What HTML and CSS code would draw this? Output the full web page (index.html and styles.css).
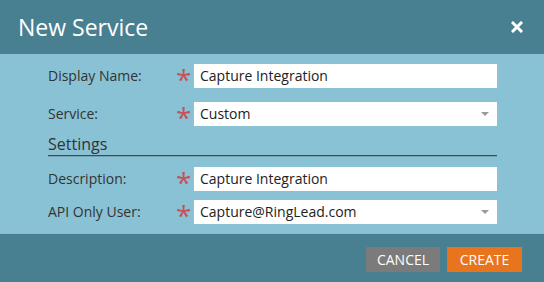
FILE: index.html
```html
<!DOCTYPE html>
<html lang="en">
<head>
    <meta charset="UTF-8">
    <meta name="viewport" content="width=device-width, initial-scale=1.0">
    <title>New Service</title>
    <link rel="stylesheet" href="styles.css">
</head>
<body>

<div class="dialog">
    <!-- En-tête -->
    <div class="dialog-header">
        <h2>New Service</h2>
        <span class="close">
            <svg width="12" height="12" viewBox="0 0 12 12">
                <path d="M2 2 L10 10 M10 2 L2 10" stroke="#fff" stroke-width="3" stroke-linecap="square"/>
            </svg>
        </span>
    </div>

    <!-- Formulaire -->
    <div class="dialog-body">
        <div class="row">
            <label>Display Name:</label>
            <span class="req">*</span>
            <div class="field">Capture Integration</div>
        </div>
        <div class="row">
            <label>Service:</label>
            <span class="req">*</span>
            <div class="field select">Custom<span class="arrow"></span></div>
        </div>

        <h3 class="section">Settings</h3>

        <div class="row tight">
            <label>Description:</label>
            <span class="req">*</span>
            <div class="field">Capture Integration</div>
        </div>
        <div class="row tight">
            <label>API Only User:</label>
            <span class="req">*</span>
            <div class="field select">Capture@RingLead.com<span class="arrow"></span></div>
        </div>
    </div>

    <!-- Boutons -->
    <div class="dialog-footer">
        <button class="btn cancel">CANCEL</button>
        <button class="btn create">CREATE</button>
    </div>
</div>

</body>
</html>
```

FILE: styles.css
```css
body {
    margin: 0;
    font-family: "Open Sans", Arial, sans-serif;
    background-color: #89c2d4;
}
.dialog {
    width: 544px;
    height: 282px;
    display: flex;
    flex-direction: column;
}
.dialog-header {
    height: 54px;
    background-color: #487f91;
    display: flex;
    align-items: center;
    justify-content: space-between;
    padding: 0 21px 0 18px;
}
.dialog-header h2 {
    margin: 0;
    font-size: 23px;
    font-weight: normal;
    color: #fff;
}
.close {
    display: flex;
}
.dialog-body {
    flex: 1;
    background-color: #89c2d4;
    padding: 10px 47px 0 48px;
    border-bottom: 1px solid #95b4bf;
}
.row {
    display: grid;
    grid-template-columns: 128px 18px 1fr;
    align-items: start;
    height: 24px;
    margin-bottom: 14px;
}
.row.tight {
    margin-bottom: 9px;
}
.row label {
    font-size: 14px;
    line-height: 24px;
    color: #333;
}
.req {
    color: #c4545a;
    font-size: 28px;
    line-height: 18px;
    height: 24px;
    padding-top: 6px;
    box-sizing: border-box;
}
.field {
    height: 24px;
    background-color: #fff;
    font-size: 14px;
    line-height: 24px;
    color: #222;
    padding-left: 6px;
    position: relative;
}
.arrow {
    position: absolute;
    right: 8px;
    top: 10px;
    border-left: 4px solid transparent;
    border-right: 4px solid transparent;
    border-top: 4px solid #999;
}
.section {
    margin: -7px 0 11px 0;
    font-size: 16px;
    font-weight: normal;
    color: #333;
    border-bottom: 1px solid #4b4446;
    box-shadow: 0 1px 0 #7aa3b1;
    line-height: 22px;
}
.dialog-footer {
    height: 48px;
    background-color: #487f91;
    display: flex;
    justify-content: flex-end;
    align-items: center;
    gap: 7px;
    padding-right: 22px;
}
.btn {
    height: 25px;
    border: none;
    font-family: "Open Sans", Arial, sans-serif;
    font-size: 14px;
    color: #fff;
    padding: 0 10px;
    margin-top: 2px;
}
.cancel {
    background-color: #7b7b7b;
    width: 74px;
}
.create {
    background-color: #e8741e;
    width: 75px;
}
```
